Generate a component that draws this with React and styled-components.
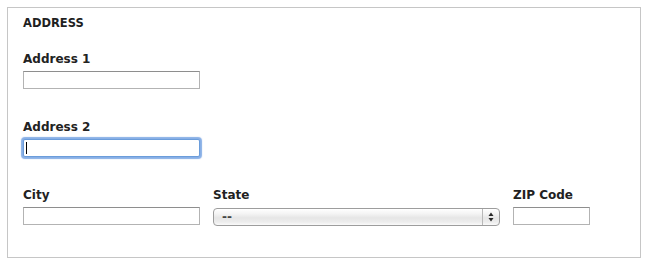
import React from "react";
import styled, { createGlobalStyle } from "styled-components";

const GlobalStyle = createGlobalStyle`
  html, body {
    margin: 0;
    padding: 0;
    background: #ffffff;
  }
  body {
    font-family: "DejaVu Sans", "Liberation Sans", sans-serif;
    color: #222222;
  }
`;

const Page = styled.div`
  padding: 7px;
  width: 651px;
  box-sizing: border-box;
`;

const Panel = styled.div`
  box-sizing: border-box;
  width: 634px;
  height: 251px;
  border: 1px solid #c6c6c6;
  padding: 9px 15px 0;
  display: flex;
  flex-direction: column;
`;

const Heading = styled.div`
  font-size: 11.5px;
  line-height: 13px;
  font-weight: bold;
  color: #1f1f1f;
  margin-bottom: 22px;
`;

const Field = styled.div`
  display: flex;
  flex-direction: column;
  width: ${(p) => p.$width}px;
  margin-bottom: ${(p) => (p.$last ? 0 : 31)}px;
`;

const Label = styled.label`
  font-size: 12px;
  line-height: 15px;
  font-weight: bold;
  color: #222222;
  margin-bottom: 4px;
`;

const InputWrap = styled.div`
  position: relative;
  width: 100%;
`;

const TextInput = styled.input`
  display: block;
  box-sizing: border-box;
  width: 100%;
  height: 18px;
  margin: 0;
  padding: 0 3px;
  font-family: "DejaVu Sans", sans-serif;
  font-size: 11px;
  background: #ffffff;
  border: 1px solid ${(p) => (p.$focused ? "#6b9ddb" : "#b3b3b3")};
  border-top-color: ${(p) => (p.$focused ? "#6b9ddb" : "#8e8e8e")};
  border-radius: ${(p) => (p.$focused ? "2px" : "0")};
  box-shadow: ${(p) =>
    p.$focused ? "0 0 1px 2px rgba(96, 148, 222, 0.75)" : "none"};
  outline: none;
`;

const Caret = styled.span`
  position: absolute;
  left: 3px;
  top: 3px;
  width: 1px;
  height: 12px;
  background: #000000;
`;

const Row = styled.div`
  display: flex;
  gap: 13px;
`;

const SelectBox = styled.div`
  position: relative;
  box-sizing: border-box;
  width: 100%;
  height: 18px;
  margin-top: 1px;
  border: 1px solid #9d9d9d;
  border-radius: 4px;
  background: linear-gradient(
    to bottom,
    #ffffff 0%,
    #f4f4f4 30%,
    #e6e6e6 55%,
    #ececec 80%,
    #fafafa 100%
  );
  box-shadow: inset 0 1px 0 rgba(255, 255, 255, 0.8);
  display: flex;
  align-items: center;
`;

const SelectValue = styled.span`
  flex: 1;
  padding-left: 8px;
  font-size: 12px;
  font-weight: bold;
  line-height: 16px;
  color: #444444;
`;

const ArrowCell = styled.span`
  width: 16px;
  height: 100%;
  border-left: 1px solid #b8b8b8;
  display: flex;
  align-items: center;
  justify-content: center;
`;

const Arrows = () => (
  <svg width="6" height="10" viewBox="0 0 6 10">
    <path d="M3 0.5 L5.5 4 L0.5 4 Z" fill="#2a2a2a" />
    <path d="M3 9.5 L5.5 6 L0.5 6 Z" fill="#2a2a2a" />
  </svg>
);

export default function App() {
  return (
    <>
      <GlobalStyle />
      <Page>
        <Panel>
          <Heading>ADDRESS</Heading>

          <Field $width={177}>
            <Label>Address 1</Label>
            <TextInput type="text" />
          </Field>

          <Field $width={177}>
            <Label>Address 2</Label>
            <InputWrap>
              <TextInput type="text" $focused />
              <Caret />
            </InputWrap>
          </Field>

          <Row>
            <Field $width={177} $last>
              <Label>City</Label>
              <TextInput type="text" />
            </Field>
            <Field $width={287} $last>
              <Label>State</Label>
              <SelectBox>
                <SelectValue>--</SelectValue>
                <ArrowCell>
                  <Arrows />
                </ArrowCell>
              </SelectBox>
            </Field>
            <Field $width={77} $last>
              <Label>ZIP Code</Label>
              <TextInput type="text" />
            </Field>
          </Row>
        </Panel>
      </Page>
    </>
  );
}
